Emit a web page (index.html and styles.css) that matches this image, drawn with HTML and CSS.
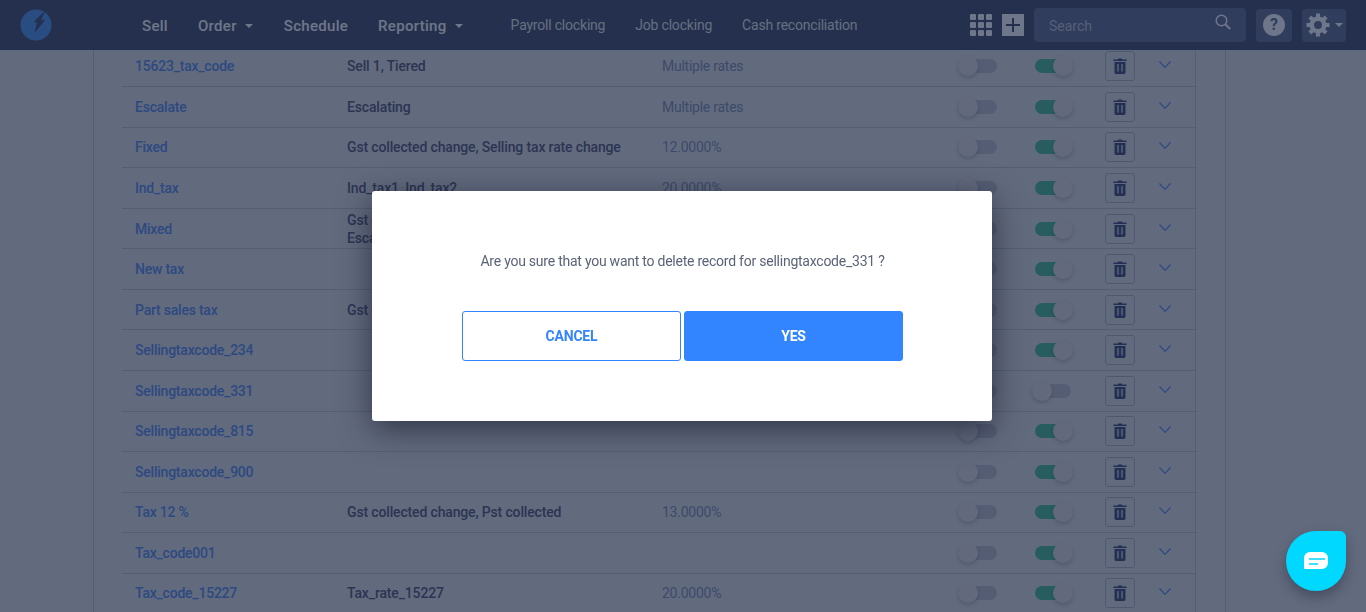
FILE: index.html
```html
<!DOCTYPE html>
<html lang="en">
<head>
  <meta charset="UTF-8">
  <title>Selling tax codes</title>
  <link rel="stylesheet" href="styles.css">
</head>
<body>
  <svg class="sprites" width="0" height="0">
    <symbol id="trash" viewBox="0 0 14 16">
      <path d="M5 1.6V.5h4v1.1h4.6v1.5H.4V1.6z" fill="currentColor"/>
      <path d="M1.5 4h11v10.6c0 .8-.6 1.4-1.4 1.4H2.900c-.8 0-1.400-.6-1.400-1.400z" fill="currentColor"/>
      <path d="M5 6v7.500M9 6v7.500" stroke="#c8cbd1" stroke-width="1.300" fill="none"/>
    </symbol>
    <symbol id="chevron" viewBox="0 0 12 7">
      <path d="M.5.5 6 6.300 11.500.5" fill="none" stroke="currentColor" stroke-width="1.200"/>
    </symbol>
  </svg>

  <header class="navbar">
    <svg class="logo" width="32" height="32" viewBox="0 0 32 32">
      <circle cx="16" cy="16" r="15.500" fill="#3a80dc"/>
      <path d="M25 2 13.500 13 17 13.500 14.500 24 25.500 10.500 21 11.500z" fill="#2e3b58"/>
    </svg>
    <nav class="nav-main">
      <a class="nav-item">Sell</a>
      <a class="nav-item has-caret">Order</a>
      <a class="nav-item">Schedule</a>
      <a class="nav-item has-caret">Reporting</a>
    </nav>
    <nav class="nav-sub">
      <a>Payroll clocking</a>
      <a>Job clocking</a>
      <a>Cash reconciliation</a>
    </nav>
    <div class="nav-tools">
      <div class="apps-grid">
        <i></i><i></i><i></i><i></i><i></i><i></i><i></i><i></i><i></i>
      </div>
      <div class="add-box">
        <svg width="14" height="14" viewBox="0 0 14 14"><path d="M7 0v14M0 7h14" stroke="#2e3b58" stroke-width="2"/></svg>
      </div>
      <div class="search-box">
        <span>Search</span>
        <svg width="16" height="16" viewBox="0 0 16 16"><circle cx="6.500" cy="6.500" r="5.300" fill="none" stroke="#e6e8ee" stroke-width="1.500"/><path d="m10.500 10.500 4.700 4.500" stroke="#e6e8ee" stroke-width="2"/></svg>
      </div>
      <div class="tool-btn help-btn"><span class="help-dot">?</span></div>
      <div class="tool-btn gear-btn">
        <svg width="24" height="24" viewBox="0 0 24 24">
          <path d="M12 .5v23M.5 12h23M3.900 3.900l16.200 16.200M20.100 3.900 3.900 20.100" stroke="#e6e8ee" stroke-width="4.200"/>
          <circle cx="12" cy="12" r="8.500" fill="#e6e8ee"/>
          <circle cx="12" cy="12" r="4" fill="#4c5a7e"/>
        </svg>
        <b class="caret"></b>
      </div>
    </div>
  </header>

  <main class="content">
    <div class="tax-table">
      <div class="row">
        <a class="code">15623_tax_code</a><span class="rates">Sell 1, Tiered</span><span class="rate">Multiple rates</span>
        <span class="toggle"></span><span class="toggle on"></span>
        <button class="trash"><svg width="14" height="16"><use href="#trash"/></svg></button>
        <svg class="chev" width="12" height="7"><use href="#chevron"/></svg>
      </div>
      <div class="row">
        <a class="code">Escalate</a><span class="rates">Escalating</span><span class="rate">Multiple rates</span>
        <span class="toggle"></span><span class="toggle on"></span>
        <button class="trash"><svg width="14" height="16"><use href="#trash"/></svg></button>
        <svg class="chev" width="12" height="7"><use href="#chevron"/></svg>
      </div>
      <div class="row">
        <a class="code">Fixed</a><span class="rates">Gst collected change, Selling tax rate change</span><span class="rate">12.0000%</span>
        <span class="toggle"></span><span class="toggle on"></span>
        <button class="trash"><svg width="14" height="16"><use href="#trash"/></svg></button>
        <svg class="chev" width="12" height="7"><use href="#chevron"/></svg>
      </div>
      <div class="row">
        <a class="code">Ind_tax</a><span class="rates">Ind_tax1, Ind_tax2</span><span class="rate">20.0000%</span>
        <span class="toggle"></span><span class="toggle on"></span>
        <button class="trash"><svg width="14" height="16"><use href="#trash"/></svg></button>
        <svg class="chev" width="12" height="7"><use href="#chevron"/></svg>
      </div>
      <div class="row">
        <a class="code">Mixed</a><span class="rates">Gst collected change,<br>Escalating</span><span class="rate"></span>
        <span class="toggle"></span><span class="toggle on"></span>
        <button class="trash"><svg width="14" height="16"><use href="#trash"/></svg></button>
        <svg class="chev" width="12" height="7"><use href="#chevron"/></svg>
      </div>
      <div class="row">
        <a class="code">New tax</a><span class="rates"></span><span class="rate"></span>
        <span class="toggle"></span><span class="toggle on"></span>
        <button class="trash"><svg width="14" height="16"><use href="#trash"/></svg></button>
        <svg class="chev" width="12" height="7"><use href="#chevron"/></svg>
      </div>
      <div class="row">
        <a class="code">Part sales tax</a><span class="rates">Gst collected change</span><span class="rate"></span>
        <span class="toggle"></span><span class="toggle on"></span>
        <button class="trash"><svg width="14" height="16"><use href="#trash"/></svg></button>
        <svg class="chev" width="12" height="7"><use href="#chevron"/></svg>
      </div>
      <div class="row">
        <a class="code">Sellingtaxcode_234</a><span class="rates"></span><span class="rate"></span>
        <span class="toggle"></span><span class="toggle on"></span>
        <button class="trash"><svg width="14" height="16"><use href="#trash"/></svg></button>
        <svg class="chev" width="12" height="7"><use href="#chevron"/></svg>
      </div>
      <div class="row">
        <a class="code">Sellingtaxcode_331</a><span class="rates"></span><span class="rate"></span>
        <span class="toggle"></span><span class="toggle moving"></span>
        <button class="trash"><svg width="14" height="16"><use href="#trash"/></svg></button>
        <svg class="chev" width="12" height="7"><use href="#chevron"/></svg>
      </div>
      <div class="row">
        <a class="code">Sellingtaxcode_815</a><span class="rates"></span><span class="rate"></span>
        <span class="toggle"></span><span class="toggle on"></span>
        <button class="trash"><svg width="14" height="16"><use href="#trash"/></svg></button>
        <svg class="chev" width="12" height="7"><use href="#chevron"/></svg>
      </div>
      <div class="row">
        <a class="code">Sellingtaxcode_900</a><span class="rates"></span><span class="rate"></span>
        <span class="toggle"></span><span class="toggle on"></span>
        <button class="trash"><svg width="14" height="16"><use href="#trash"/></svg></button>
        <svg class="chev" width="12" height="7"><use href="#chevron"/></svg>
      </div>
      <div class="row">
        <a class="code">Tax 12 %</a><span class="rates">Gst collected change, Pst collected</span><span class="rate">13.0000%</span>
        <span class="toggle"></span><span class="toggle on"></span>
        <button class="trash"><svg width="14" height="16"><use href="#trash"/></svg></button>
        <svg class="chev" width="12" height="7"><use href="#chevron"/></svg>
      </div>
      <div class="row">
        <a class="code">Tax_code001</a><span class="rates"></span><span class="rate"></span>
        <span class="toggle"></span><span class="toggle on"></span>
        <button class="trash"><svg width="14" height="16"><use href="#trash"/></svg></button>
        <svg class="chev" width="12" height="7"><use href="#chevron"/></svg>
      </div>
      <div class="row">
        <a class="code">Tax_code_15227</a><span class="rates">Tax_rate_15227</span><span class="rate">20.0000%</span>
        <span class="toggle"></span><span class="toggle on"></span>
        <button class="trash"><svg width="14" height="16"><use href="#trash"/></svg></button>
        <svg class="chev" width="12" height="7"><use href="#chevron"/></svg>
      </div>
    </div>
  </main>

  <div class="backdrop">
    <div class="dialog">
      <p class="dialog-msg">Are you sure that you want to delete record for sellingtaxcode_331 ?</p>
      <div class="dialog-actions">
        <button class="btn btn-outline">CANCEL</button>
        <button class="btn btn-solid">YES</button>
      </div>
    </div>
  </div>

  <div class="chat-bubble">
    <svg width="24" height="18" viewBox="0 0 24 18">
      <path d="M6 0h12a6 6 0 0 1 6 6v5a6 6 0 0 1-6 6H1a1 1 0 0 1-1-1V6a6 6 0 0 1 6-6z" fill="#fff"/>
      <path d="M5 7h16M5 12h9" stroke="#00d8ff" stroke-width="1.600"/>
    </svg>
  </div>
</body>
</html>
```

FILE: styles.css
```css
* {
  box-sizing: border-box;
}

html, body {
  height: 100%;
}

body {
  margin: 0;
  overflow: hidden;
  background-color: #c8cbd1;
  font-family: Roboto, "Liberation Sans", sans-serif;
  font-size: 14px;
}

.sprites {
  position: absolute;
}

/* top bar */
.navbar {
  position: fixed;
  top: 0;
  left: 0;
  right: 0;
  height: 50px;
  display: flex;
  align-items: center;
  padding-left: 20px;
  background-color: #2e3b58;
  color: #e6e8ee;
}

.nav-main {
  display: flex;
  gap: 30px;
  margin-left: 90px;
  padding-top: 2px;
}

.nav-item {
  font-size: 15px;
  font-weight: 500;
  letter-spacing: 0.3px;
}

.has-caret {
  margin-right: 1px;
}

.has-caret::after {
  content: "";
  display: inline-block;
  margin-left: 8px;
  vertical-align: 3px;
  border-top: 4px solid #e6e8ee;
  border-left: 4px solid transparent;
  border-right: 4px solid transparent;
}

.nav-sub {
  display: flex;
  gap: 30px;
  margin-left: 47px;
  font-size: 14px;
  letter-spacing: -0.2px;
  color: #cfd6dc;
}

.nav-tools {
  display: flex;
  align-items: center;
  margin-left: auto;
  padding-right: 20px;
}

.apps-grid {
  display: grid;
  grid-template-columns: repeat(3, 6px);
  gap: 2px;
  margin-right: 10px;
}

.apps-grid i {
  height: 6px;
  border-radius: 1px;
  background-color: #e6e8ee;
}

.add-box {
  width: 22px;
  height: 22px;
  display: flex;
  align-items: center;
  justify-content: center;
  margin-right: 10px;
  background-color: #e6e8ee;
}

.search-box {
  width: 212px;
  height: 34px;
  display: flex;
  align-items: center;
  justify-content: space-between;
  padding: 0 15px;
  border-radius: 4px;
  background-color: #4c5a7e;
  color: #a9b1c4;
}

.search-box span {
  padding-top: 2px;
}

.search-box svg {
  margin-top: -6px;
}

.tool-btn {
  height: 33px;
  display: flex;
  align-items: center;
  justify-content: center;
  border-radius: 4px;
  background-color: #4c5a7e;
}

.help-btn {
  width: 36px;
  margin-left: 10px;
}

.help-dot {
  width: 22px;
  height: 22px;
  border-radius: 50%;
  background-color: #e6e8ee;
  color: #4c5a7e;
  font-size: 16px;
  font-weight: 700;
  line-height: 22px;
  text-align: center;
}

.gear-btn {
  width: 44px;
  margin-left: 10px;
  gap: 5px;
}

.caret {
  border-top: 4px solid #e6e8ee;
  border-left: 4px solid transparent;
  border-right: 4px solid transparent;
}

/* table */
.content {
  width: 1133px;
  height: 100%;
  margin-left: 93px;
  padding: 46.6px 29px 0 28px;
  border-left: 1px solid #a6adb5;
  border-right: 1px solid #a6adb5;
}

.tax-table {
  border-right: 1px solid #a6adb5;
}

.row {
  height: 40.55px;
  display: grid;
  grid-template-columns: 212px 315px 296px 77px 70px 52px 1fr;
  align-items: center;
  padding-left: 13px;
  border-bottom: 1px solid #a6adb5;
  line-height: 18px;
}

.code {
  color: #4478d8;
  font-weight: 500;
  letter-spacing: -0.22px;
}

.rates {
  color: #3f4665;
  font-weight: 500;
  letter-spacing: -0.15px;
}

.rate {
  color: #6a7c9c;
  letter-spacing: -0.25px;
}

.toggle {
  position: relative;
  width: 39px;
  height: 14px;
  border-radius: 7px;
  background-color: #a8abb8;
}

.toggle::after {
  content: "";
  position: absolute;
  top: -3px;
  left: 0;
  width: 20px;
  height: 20px;
  border-radius: 50%;
  background-color: #c9c9d0;
  box-shadow: 0 2px 4px rgba(0, 0, 0, 0.22);
}

.toggle.on {
  width: 35px;
  background-color: #36ab82;
}

.toggle.on::after {
  left: 18px;
}

.toggle.moving {
  margin-left: -3px;
}

.trash {
  width: 30px;
  height: 30px;
  display: flex;
  align-items: center;
  justify-content: center;
  padding: 0;
  border: 1px solid #9aa1a8;
  border-radius: 3px;
  background: none;
  color: #2f3a66;
}

.chev {
  margin: 0 0 3px 2px;
  color: #4478d8;
}

/* delete dialog */
.backdrop {
  position: fixed;
  inset: 0;
  display: flex;
  align-items: center;
  justify-content: center;
  padding-right: 2px;
  background-color: rgba(30, 42, 70, 0.6);
}

.dialog {
  width: 620px;
  padding: 60px 89px 60px 90px;
  border-radius: 3px;
  background-color: #fff;
  box-shadow: 0 8px 32px rgba(20, 24, 40, 0.65);
}

.dialog-msg {
  margin: 0 0 40px;
  color: #5a6378;
  line-height: 20px;
  letter-spacing: -0.24px;
  text-align: center;
}

.dialog-actions {
  display: flex;
  gap: 3px;
}

.btn {
  flex: 1;
  height: 50px;
  border: 1px solid #3385ff;
  border-radius: 3px;
  font-family: inherit;
  font-size: 14px;
  font-weight: 700;
  letter-spacing: -0.2px;
}

.btn-outline {
  background-color: #fff;
  color: #3385ff;
}

.btn-solid {
  background-color: #3385ff;
  color: #fff;
}

/* chat launcher */
.chat-bubble {
  position: fixed;
  right: 20px;
  bottom: 21px;
  width: 60px;
  height: 60px;
  display: flex;
  align-items: center;
  justify-content: center;
  border-radius: 50% 6px 50% 50%;
  background-color: #00d8ff;
  box-shadow: 0 6px 12px rgba(20, 24, 40, 0.35);
}
```
